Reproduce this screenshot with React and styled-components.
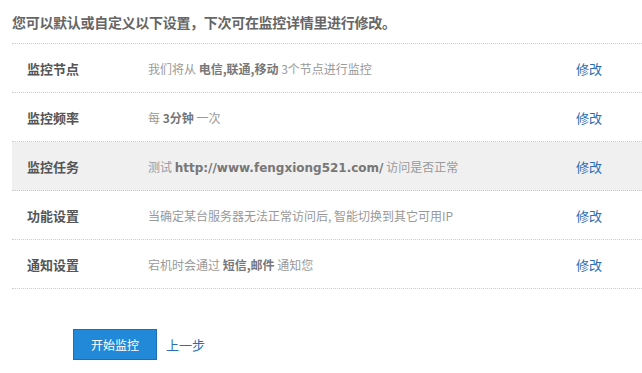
import React from 'react'
import styled, { createGlobalStyle } from 'styled-components'

const GlobalStyle = createGlobalStyle`
  body {
    margin: 0;
    background: #ffffff;
    font-family: "Noto Sans CJK SC", "Liberation Sans", sans-serif;
  }
`

const Page = styled.div`
  padding: 12px 0 0 12px;
  width: 630px;
`
const Intro = styled.h2`
  color: #666666;
  font-size: 14px;
  font-weight: bold;
  letter-spacing: -0.3px;
  line-height: 20px;
  margin: 0;
  padding-bottom: 11px;
  border-bottom: 1px dotted #cccccc;
`
const List = styled.div`
  display: flex;
  flex-direction: column;
`
const Row = styled.div`
  align-items: center;
  background: ${(p) => (p.$active ? '#f0f0f0' : 'transparent')};
  border-bottom: 1px dotted #cccccc;
  display: grid;
  grid-template-columns: 121px 1fr 66px;
  height: 48px;
  padding-left: 15px;
`
const Label = styled.div`
  color: #555555;
  font-size: 13px;
  font-weight: bold;
`
const Desc = styled.div`
  color: #999999;
  font-size: 12px;
  white-space: nowrap;
`
const Strong = styled.b`
  color: #777777;
  font-family: ${(p) => (p.$mono ? '"DejaVu Sans", sans-serif' : 'inherit')};
`
const Edit = styled.a`
  color: #2a6db3;
  cursor: pointer;
  font-size: 13px;
`
const Actions = styled.div`
  align-items: center;
  display: flex;
  gap: 9px;
  padding: 40px 0 0 61px;
`
const Button = styled.button`
  background: #2289d9;
  border: 1px solid #1b6fb3;
  color: #ffffff;
  cursor: pointer;
  font-family: inherit;
  font-size: 12px;
  height: 31px;
  width: 84px;
`
const Back = styled.a`
  color: #2a6db3;
  cursor: pointer;
  font-size: 13px;
`

const rows = [
  {
    label: '监控节点',
    desc: (
      <>
        我们将从 <Strong>电信,联通,移动</Strong> 3个节点进行监控
      </>
    ),
  },
  {
    label: '监控频率',
    desc: (
      <>
        每 <Strong>3分钟</Strong> 一次
      </>
    ),
  },
  {
    label: '监控任务',
    active: true,
    desc: (
      <>
        测试 <Strong $mono>http://www.fengxiong521.com/</Strong> 访问是否正常
      </>
    ),
  },
  {
    label: '功能设置',
    desc: '当确定某台服务器无法正常访问后, 智能切换到其它可用IP',
  },
  {
    label: '通知设置',
    desc: (
      <>
        宕机时会通过 <Strong>短信,邮件</Strong> 通知您
      </>
    ),
  },
]

const App = () => {
  return (
    <Page>
      <GlobalStyle />
      <Intro>您可以默认或自定义以下设置，下次可在监控详情里进行修改。</Intro>
      <List>
        {rows.map((r) => (
          <Row key={r.label} $active={r.active}>
            <Label>{r.label}</Label>
            <Desc>{r.desc}</Desc>
            <Edit>修改</Edit>
          </Row>
        ))}
      </List>
      <Actions>
        <Button>开始监控</Button>
        <Back>上一步</Back>
      </Actions>
    </Page>
  )
}

export default App
